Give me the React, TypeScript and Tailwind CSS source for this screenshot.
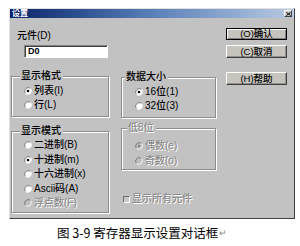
import React from "react";

const Radio = ({ checked, disabled }: { checked?: boolean; disabled?: boolean }) => (
  <svg width="8" height="8" viewBox="0 0 12 12" className="shrink-0">
    <circle cx="6" cy="6" r="5" fill={disabled ? "#c0c0c0" : "#fff"} />
    <path d="M2.2 9.8A5.4 5.4 0 0 1 9.8 2.2" fill="none" stroke="#707070" strokeWidth="1.3" />
    <path d="M9.8 2.2A5.4 5.4 0 0 1 2.2 9.8" fill="none" stroke="#fff" strokeWidth="1.3" />
    {checked && <circle cx="6" cy="6" r="2" fill={disabled ? "#808080" : "#000"} />}
  </svg>
);

const Option = ({
  label,
  checked,
  disabled,
  className,
}: {
  label: string;
  checked?: boolean;
  disabled?: boolean;
  className: string;
}) => (
  <div className={`flex items-center gap-[2px] ${className}`}>
    <Radio checked={checked} disabled={disabled} />
    <span
      className={
        disabled
          ? "text-[#8a8a8a] [text-shadow:1px_1px_0_#fff] leading-[12px]"
          : "text-black leading-[12px]"
      }
    >
      {label}
    </span>
  </div>
);

const Group = ({
  label,
  disabled,
  labelClass,
  className,
  children,
}: {
  label: string;
  disabled?: boolean;
  labelClass: string;
  className: string;
  children: React.ReactNode;
}) => (
  <div
    className={`relative border border-[#8c8c8c] shadow-[inset_1px_1px_0_#fff,1px_1px_0_#fff] ${className}`}
  >
    <span
      className={`absolute -top-[7px] bg-[#c2c2c2] pr-[2px] leading-[12px] ${labelClass} ${
        disabled ? "text-[#8a8a8a] [text-shadow:1px_1px_0_#fff]" : "text-black"
      }`}
    >
      {label}
    </span>
    {children}
  </div>
);

const Button = ({ label, isDefault, className }: { label: string; isDefault?: boolean; className: string }) => (
  <div
    className={`flex items-center justify-center bg-[#c6c4bc] text-[9.5px] leading-none text-black ${
      isDefault
        ? "border border-black shadow-[inset_1px_1px_0_#fff,inset_-1px_-1px_0_#808080]"
        : "border border-t-white border-l-white border-r-[#404040] border-b-[#404040] shadow-[inset_-1px_-1px_0_#909090]"
    } ${className}`}
  >
    {label}
  </div>
);

export default function App() {
  return (
    <div className="w-[300px] h-[246px] overflow-hidden bg-white pt-[8px] pl-[9px] font-['Liberation_Sans','Noto_Sans_CJK_SC',sans-serif]">
      <div className="w-[286px] h-[211px] flex flex-col bg-[#c2c2c2] border border-t-[#e0e0e0] border-l-[#e0e0e0] border-r-[#404040] border-b-[#404040] text-[10px] font-medium">
        {/* title bar */}
        <div className="h-[9px] flex items-center justify-between bg-gradient-to-r from-[#0a246a] via-[#5a7fb8] to-[#b9cbe2] pl-[2px] pr-[2px]">
          <span className="text-[8px] leading-none font-bold text-white">设置</span>
          <div className="w-[8px] h-[7px] flex items-center justify-center bg-[#c8c8c8] border border-t-white border-l-white border-r-[#404040] border-b-[#404040]">
            <svg width="5" height="4" viewBox="0 0 5 4">
              <path d="M0.5 0.5L4.5 3.5M4.5 0.5L0.5 3.5" stroke="#000" strokeWidth="1" />
            </svg>
          </div>
        </div>

        <div className="flex pl-[1px]">
          {/* left column */}
          <div className="w-[98px] flex flex-col">
            <div className="mt-[12px] ml-[6px] leading-[12px]">元件(D)</div>
            <div className="mt-[3px] ml-[13px] w-[84px] h-[13px] flex items-center bg-white border border-t-[#808080] border-l-[#808080] border-r-white border-b-white shadow-[inset_1px_1px_0_#404040] pl-[3px] text-[9px] font-bold leading-none">
              D0
            </div>
            <Group label="显示格式" labelClass="left-[8px] pl-[1px]" className="mt-[18px] h-[41px] pt-[7px] pl-[12px]">
              <Option label="列表(I)" checked className="h-[14px]" />
              <Option label="行(L)" className="h-[14px]" />
            </Group>
            <Group label="显示模式" labelClass="left-[8px] pl-[1px]" className="mt-[14px] h-[82px] pt-[6px] pl-[12px]">
              <Option label="二进制(B)" className="h-[14.5px]" />
              <Option label="十进制(m)" checked className="h-[14.5px]" />
              <Option label="十六进制(x)" className="h-[14.5px]" />
              <Option label="Ascii码(A)" className="h-[14.5px]" />
              <Option label="浮点数(F)" disabled className="h-[14.5px]" />
            </Group>
          </div>

          {/* middle column */}
          <div className="ml-[12px] w-[95px] flex flex-col">
            <Group label="数据大小" labelClass="left-[3px] pl-[1px]" className="mt-[59px] h-[41px] pt-[7px] pl-[13px]">
              <Option label="16位(1)" checked className="h-[14px]" />
              <Option label="32位(3)" className="h-[14px]" />
            </Group>
            <Group label="低8位" disabled labelClass="left-[5px] pl-[1px]" className="mt-[10px] h-[42px] pt-[9px] pl-[13px]">
              <Option label="偶数(e)" checked disabled className="h-[15px]" />
              <Option label="奇数(o)" disabled className="h-[15px]" />
            </Group>
            <div className="mt-[23px] ml-[2px] h-[12px] flex items-center gap-[2px]">
              <div className="w-[7px] h-[7px] bg-[#c8c8c8] border border-t-[#707070] border-l-[#707070] border-r-white border-b-white" />
              <span className="text-[#8a8a8a] [text-shadow:1px_1px_0_#fff] leading-[12px]">显示所有元件</span>
            </div>
          </div>

          {/* buttons */}
          <div className="ml-[10px] w-[61px] flex flex-col">
            <Button label="(O)确认" isDefault className="mt-[10px] h-[12px]" />
            <Button label="(C)取消" className="mt-[5px] h-[13px]" />
            <Button label="(H)帮助" className="mt-[14px] h-[13px]" />
          </div>
        </div>
      </div>

      <div className="mt-[7px] ml-[48px] flex items-center text-[12.5px] leading-[14px] text-black font-['Noto_Sans_CJK_SC',sans-serif]">
        <span>图 3-9 寄存器显示设置对话框</span>
        <span className="ml-[1px] text-[9px] text-[#888]">↵</span>
      </div>
    </div>
  );
}
